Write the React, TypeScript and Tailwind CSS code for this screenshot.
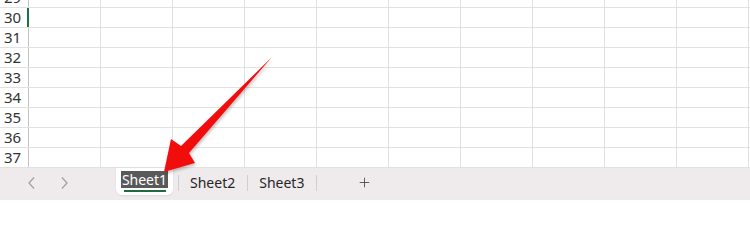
import { Plus } from 'lucide-react';

const ROWS = [29, 30, 31, 32, 33, 34, 35, 36, 37];
const COLS = Array.from({ length: 10 });

const Chevron = ({ dir }: { dir: 'left' | 'right' }) => (
  <svg width="10" height="14" viewBox="0 0 10 14" fill="none" stroke="#a3a3a3" strokeWidth="1.3">
    {dir === 'left' ? <path d="M7 1.5 L2 7 L7 12.5" /> : <path d="M3 1.5 L8 7 L3 12.5" />}
  </svg>
);

const Separator = () => <div className="h-[16px] w-px bg-[#cfcfcf]" />;

export default function App() {
  return (
    <div
      className="relative h-[200px] w-[750px] overflow-hidden bg-white"
      style={{ fontFamily: '"Noto Sans", "Segoe UI", Arial, sans-serif' }}
    >
      {/* grid */}
      <div className="flex h-[168px] flex-col justify-end overflow-hidden">
        {ROWS.map((row) => (
          <div key={row} className="flex h-5 shrink-0 border-b border-[#e1e1e1]">
            <div className="relative flex w-[29px] shrink-0 items-center border-r border-[#c4c4c4] pl-[4px] text-[15px] leading-none text-[#333333]">
              {row}
              {row === 30 && <div className="absolute -right-px top-0 h-full w-[2px] bg-[#1e7145]" />}
            </div>
            {COLS.map((_, i) => (
              <div key={i} className="w-[72px] shrink-0 border-r border-[#e1e1e1]" />
            ))}
          </div>
        ))}
      </div>

      {/* sheet tabs */}
      <div className="flex h-8 items-start bg-[#efeaec] text-[14px] text-[#262626]">
        <div className="flex h-[30px] w-[116px] items-center gap-[22px] pl-[27px]">
          <Chevron dir="left" />
          <Chevron dir="right" />
        </div>
        <div className="flex h-[27px] w-[57px] flex-col items-center rounded-b-[6px] bg-white pt-[3px] shadow-[0_1px_2px_rgba(0,0,0,0.08)]">
          <span className="bg-[#595959] px-px leading-[17px] text-white">Sheet1</span>
          <div className="mt-[2px] h-[2px] w-[42px] bg-[#1e6b41]" />
        </div>
        <div className="flex h-[30px] items-center">
          <div className="ml-[5px]">
            <Separator />
          </div>
          <span className="pb-[2px] pl-[11px] pr-[12px]">Sheet2</span>
          <Separator />
          <span className="pb-[2px] pl-[11px] pr-[12px]">Sheet3</span>
          <Separator />
          <Plus className="mb-[2px] ml-[40px]" size={15} strokeWidth={1.3} color="#404040" />
        </div>
      </div>

      {/* red arrow */}
      <svg
        className="pointer-events-none absolute left-0 top-0"
        width="750"
        height="200"
        viewBox="0 0 750 200"
      >
        <defs>
          <filter id="sh" x="-20%" y="-20%" width="140%" height="140%">
            <feDropShadow dx="1" dy="2" stdDeviation="1.5" floodColor="#000" floodOpacity="0.25" />
          </filter>
        </defs>
        <polygon
          points="272,57 189,153 195,163 164,172 171,139 181,146"
          fill="#f20d0d"
          filter="url(#sh)"
        />
      </svg>
    </div>
  );
}
